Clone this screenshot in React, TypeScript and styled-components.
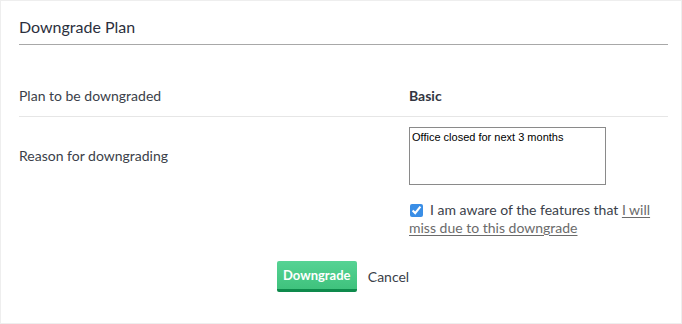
import styled, { createGlobalStyle } from "styled-components";

const GlobalStyle = createGlobalStyle`
  html, body {
    margin: 0;
    padding: 0;
    background: #ffffff;
  }
  body {
    font-family: Lato, "Open Sans", sans-serif;
  }
`;

const Card = styled.div`
  box-sizing: border-box;
  width: 682px;
  height: 324px;
  border: 1px solid #eeeeee;
  padding: 0 13px 0 18px;
  background: #fff;
`;

const Header = styled.div`
  padding-top: 16px;
  padding-bottom: 8px;
  border-bottom: 1px solid #a8a8a8;
`;

const Title = styled.h2`
  margin: 0;
  font-size: 16px;
  line-height: 19px;
  font-weight: 400;
  color: #2b2f3d;
`;

const Body = styled.div`
  margin-top: 31px;
`;

const Row = styled.div<{ $divider?: boolean }>`
  display: grid;
  grid-template-columns: 390px 1fr;
  padding: 10px 0;
  border-bottom: ${(p) => (p.$divider ? "1px solid #e6e6e6" : "none")};
`;

const Label = styled.div`
  font-size: 14px;
  line-height: 20px;
  color: #3b3f4a;
  align-self: center;
`;

const Value = styled.div`
  font-size: 14px;
  line-height: 20px;
  font-weight: 700;
  color: #333642;
`;

const TextArea = styled.textarea`
  box-sizing: border-box;
  width: 197px;
  height: 58px;
  border: 1px solid #8a8a8a;
  border-radius: 0;
  padding: 3px 2px;
  margin: 0;
  font-family: "Liberation Sans", Arial, sans-serif;
  font-size: 11px;
  color: #000;
  resize: none;
  display: block;
  outline: none;
`;

const Aware = styled.label`
  grid-column: 2;
  margin-top: 16px;
  font-size: 14px;
  line-height: 18px;
  color: #3b3f4a;
  max-width: 250px;
`;

const Check = styled.input`
  width: 13px;
  height: 13px;
  margin: 0 7px 0 1px;
  vertical-align: -2px;
  accent-color: #3a8ee6;
`;

const Link = styled.a`
  color: #6b6b6b;
  text-decoration: underline;
  text-underline-offset: 2px;
`;

const Actions = styled.div`
  display: flex;
  justify-content: center;
  align-items: center;
  gap: 11px;
  margin-top: 14px;
  padding-right: 1px;
`;

const PrimaryButton = styled.button`
  box-sizing: border-box;
  width: 80px;
  height: 31px;
  border: none;
  border-bottom: 3px solid #0e8a4c;
  border-radius: 2px;
  background: linear-gradient(#56d394, #3fc27d);
  color: #fff;
  font-family: Lato, sans-serif;
  font-size: 13px;
  font-weight: 700;
  padding: 0;
`;

const CancelLink = styled.span`
  font-size: 14px;
  color: #3b3f4a;
`;

export default function App() {
  return (
    <>
      <GlobalStyle />
      <Card>
        <Header>
          <Title>Downgrade Plan</Title>
        </Header>
        <Body>
          <Row $divider>
            <Label>Plan to be downgraded</Label>
            <Value>Basic</Value>
          </Row>
          <Row>
            <Label>Reason for downgrading</Label>
            <TextArea defaultValue="Office closed for next 3 months" />
            <Aware>
              <Check type="checkbox" defaultChecked />I am aware of the features
              that <Link href="#">I will miss due to this downgrade</Link>
            </Aware>
          </Row>
        </Body>
        <Actions>
          <PrimaryButton>Downgrade</PrimaryButton>
          <CancelLink>Cancel</CancelLink>
        </Actions>
      </Card>
    </>
  );
}
